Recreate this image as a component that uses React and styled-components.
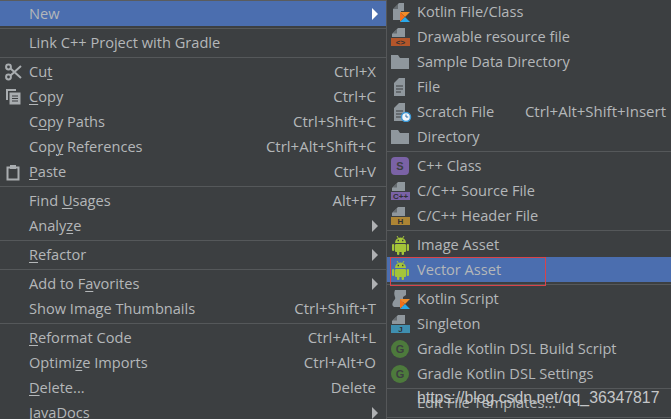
import React from "react";
import styled, { createGlobalStyle } from "styled-components";

const Global = createGlobalStyle`
  html, body { margin: 0; padding: 0; background: #3c3f41; }
  #root { width: 671px; height: 419px; overflow: hidden; }
`;
const Page = styled.div`
  position: relative; width: 671px; height: 419px; overflow: hidden;
  display: flex; background: #3c3f41; color: #b4b7b9;
  font-family: "Open Sans", "Noto Sans", sans-serif; font-size: 14.6px;
`;
const Menu = styled.div`
  flex: ${p => (p.$side ? "1" : "0 0 386px")};
  padding-top: ${p => (p.$side ? "0" : "1px")};
  margin-top: ${p => (p.$side ? "-1px" : "0")};
  display: flex; flex-direction: column;
  border-left: ${p => (p.$side ? "1px solid #555759" : "none")};
  box-shadow: ${p => (p.$side ? "none" : "inset 0 1px 0 #5a5c5e")};
`;
const Row = styled.div`
  flex: 0 0 25px; height: 25px; display: flex; align-items: center;
  padding: ${p => (p.$side ? "0 5px 0 4px" : "0 10px 0 5px")};
  background: ${p => (p.$active ? "#4b6eaf" : "transparent")};
`;
const IconSlot = styled.span`
  flex: 0 0 ${p => (p.$side ? "26px" : "24px")};
  display: flex; align-items: center;
`;
const Label = styled.span` flex: 1; white-space: nowrap; position: relative; top: -1px; `;
const Shortcut = styled.span` white-space: nowrap; position: relative; top: -1px; font-size: 15px; `;
const Key = styled.span` text-decoration: underline; text-underline-offset: 2px; text-decoration-thickness: 1px; `;
const Separator = styled.div`
  flex: 0 0 ${p => p.$h || 4}px; display: flex; align-items: center;
  &::after { content: ""; flex: 1; height: 1px; background: #55585a; }
`;
const Arrow = styled.span`
  width: 0; height: 0; margin-right: -2px;
  border-top: 6px solid transparent; border-bottom: 6px solid transparent;
  border-left: 6px solid ${p => (p.$white ? "#ffffff" : "#afb1b3")};
`;
const Annotation = styled.div`
  position: absolute; left: 390px; top: 257px; width: 154px; height: 27px;
  border: 1px solid #d8434a;
`;
const Watermark = styled.div`
  position: absolute; left: 417px; top: 389px;
  font-family: "Liberation Sans", Arial, sans-serif; font-size: 15.8px;
  color: #c4c6c8; white-space: nowrap;
`;

const G = "#8f979d";
const Svg = ({ children }) => <svg width="22" height="20" viewBox="0 0 22 20">{children}</svg>;
const KotlinK = ({ x = 10, y = 10 }) => (
  <g transform={`translate(${x} ${y})`}>
    <path d="M0 0h10l-5 5z" fill="#f08c2a" />
    <path d="M0 0v10l5-5z" fill="#f2701c" />
    <path d="M0 10l5-5 5 5z" fill="#29a8ea" />
  </g>
);
const KotlinFile = () => <Svg><path d="M8 1h5v8h-3v9H2V7z" fill={G} /><path d="M7 2v5H2z" fill="#3c3f41" opacity=".5" /><KotlinK x={9} y={10} /></Svg>;
const Tagged = ({ color, children, ink = "#2f3133" }) => (
  <Svg>
    <path d="M7 1h7v9H1V7z" fill={G} />
    <path d="M6 2v4.5H2z" fill="#3c3f41" opacity=".5" />
    <rect x="0" y="11" width="19" height="8" fill={color} />
    <text x="9.5" y="18" fontSize="8" fontWeight="700" textAnchor="middle" fill={ink} fontFamily="Liberation Sans">{children}</text>
  </Svg>
);
const Folder = () => <Svg><path d="M0 3h7l2 3h9v11H0z" fill={G} /></Svg>;
const FileLines = ({ clock }) => (
  <Svg>
    <path d="M8 1h6v18H3V6z" fill={G} />
    <path d="M5 9h7M5 12h7M5 15h5" stroke="#3c3f41" strokeWidth="1.2" />
    {clock && <><circle cx="15" cy="15" r="4.5" fill="#f2f6fa" stroke="#3d9ad8" strokeWidth="1.5" /><path d="M15 12.5V15h2.2" stroke="#2a6ea8" strokeWidth="1" fill="none" /></>}
  </Svg>
);
const Badge = ({ color, ink, round, children }) => (
  <Svg>
    {round ? <circle cx="9" cy="10" r="9" fill={color} /> : <rect y="1" width="18" height="18" rx="4" fill={color} />}
    <text x="9" y="14" fontSize="11" fontWeight="700" textAnchor="middle" fill={ink} fontFamily="Liberation Sans">{children}</text>
  </Svg>
);
const Android = () => (
  <svg width="22" height="20" viewBox="0 0 22 20">
    <g fill="#a4c439">
      <path d="M4 8a5.5 5.5 0 0 1 11 0z" />
      <rect x="4" y="9" width="11" height="8" rx="1" />
      <rect x="1" y="9" width="2.3" height="7" rx="1.1" />
      <rect x="15.7" y="9" width="2.3" height="7" rx="1.1" />
      <rect x="6" y="16" width="2.4" height="4" rx="1" />
      <rect x="10.6" y="16" width="2.4" height="4" rx="1" />
      <path d="M6 1l1.6 2.5M13 1l-1.6 2.5" stroke="#a4c439" strokeWidth="1" />
    </g>
    <rect x="6.6" y="4.8" width="1.4" height="1.4" fill="#3c3f41" />
    <rect x="11" y="4.8" width="1.4" height="1.4" fill="#3c3f41" />
  </svg>
);
const KotlinScript = () => <Svg><path d="M4 1h11v5l-3 2v10H3c-2-1-2-3-1-5 1-2 3-3 2-5-1-2-1-5 0-7z" fill={G} /><KotlinK x={9} y={10} /></Svg>;
const Scissors = () => (
  <svg width="18" height="18" viewBox="0 0 18 18" fill="none" stroke="#a9adb0" strokeWidth="2">
    <circle cx="3.5" cy="4" r="2.4" /><circle cx="3.5" cy="14" r="2.4" />
    <path d="M5.5 5.5L16 15M5.5 12.5L16 3" />
  </svg>
);
const CopyIcon = () => (
  <svg width="18" height="18" viewBox="0 0 18 18">
    <path d="M1 1h10v2H3v9H1z" fill="#a9adb0" />
    <rect x="4.5" y="4.5" width="11" height="12" fill="#a9adb0" />
    <path d="M7 8h6M7 10.5h6M7 13h6" stroke="#3c3f41" strokeWidth="1.2" />
  </svg>
);
const PasteIcon = () => (
  <svg width="18" height="18" viewBox="0 0 18 18">
    <path d="M2.5 4.5h11v12h-11z" fill="none" stroke="#a9adb0" strokeWidth="2" />
    <rect x="5" y="2" width="6" height="4" fill="#a9adb0" />
  </svg>
);

const left = [
  { l: "New", active: true, arrow: true }, { sep: 4 },
  { l: "Link C++ Project with Gradle" }, { sep: 4 },
  { l: <>Cu<Key>t</Key></>, s: "Ctrl+X", i: <Scissors /> },
  { l: <><Key>C</Key>opy</>, s: "Ctrl+C", i: <CopyIcon /> },
  { l: <>C<Key>o</Key>py Paths</>, s: "Ctrl+Shift+C" },
  { l: <>Cop<Key>y</Key> References</>, s: "Ctrl+Alt+Shift+C" },
  { l: <><Key>P</Key>aste</>, s: "Ctrl+V", i: <PasteIcon /> }, { sep: 4 },
  { l: <>Find <Key>U</Key>sages</>, s: "Alt+F7" },
  { l: <>Analy<Key>z</Key>e</>, arrow: true }, { sep: 4 },
  { l: <><Key>R</Key>efactor</>, arrow: true }, { sep: 4 },
  { l: <>Add to F<Key>a</Key>vorites</>, arrow: true },
  { l: "Show Image Thumbnails", s: "Ctrl+Shift+T" }, { sep: 4 },
  { l: <><Key>R</Key>eformat Code</>, s: "Ctrl+Alt+L" },
  { l: <>Optimi<Key>z</Key>e Imports</>, s: "Ctrl+Alt+O" },
  { l: <><Key>D</Key>elete...</>, s: "Delete" },
  { l: "JavaDocs", arrow: true },
];
const right = [
  { l: "Kotlin File/Class", i: <KotlinFile /> },
  { l: "Drawable resource file", i: <Tagged color="#b4562a">{"<>"}</Tagged> },
  { l: "Sample Data Directory", i: <Folder /> },
  { l: "File", i: <FileLines /> },
  { l: "Scratch File", s: "Ctrl+Alt+Shift+Insert", i: <FileLines clock /> },
  { l: "Directory", i: <Folder /> }, { sep: 4 },
  { l: "C++ Class", i: <Badge color="#7a62a6" ink="#3c3f41">S</Badge> },
  { l: "C/C++ Source File", i: <Tagged color="#7a62a6">C++</Tagged> },
  { l: "C/C++ Header File", i: <Tagged color="#ad8534">H</Tagged> }, { sep: 4 },
  { l: "Image Asset", i: <Android /> },
  { l: "Vector Asset", i: <Android />, active: true }, { sep: 4 },
  { l: "Kotlin Script", i: <KotlinScript /> },
  { l: "Singleton", i: <Tagged color="#3f8fb0">J</Tagged> },
  { l: "Gradle Kotlin DSL Build Script", i: <Badge round color="#4d7a3c" ink="#3c3f41">G</Badge> },
  { l: "Gradle Kotlin DSL Settings", i: <Badge round color="#4d7a3c" ink="#3c3f41">G</Badge> }, { sep: 4 },
  { l: "Edit File Templates..." }, { sep: 4 },
];

const renderRows = (rows, side) => rows.map((r, n) =>
  r.sep ? <Separator key={n} $h={r.sep} /> : (
    <Row key={n} $active={r.active} $side={side}>
      <IconSlot $side={side}>{r.i}</IconSlot>
      <Label>{r.l}</Label>
      {r.s && <Shortcut>{r.s}</Shortcut>}
      {r.arrow && <Arrow $white={r.active} />}
    </Row>
  )
);

export default function App() {
  return (
    <Page>
      <Global />
      <Menu>{renderRows(left, false)}</Menu>
      <Menu $side>{renderRows(right, true)}</Menu>
      <Annotation />
      <Watermark>https://blog.csdn.net/qq_36347817</Watermark>
    </Page>
  );
}
